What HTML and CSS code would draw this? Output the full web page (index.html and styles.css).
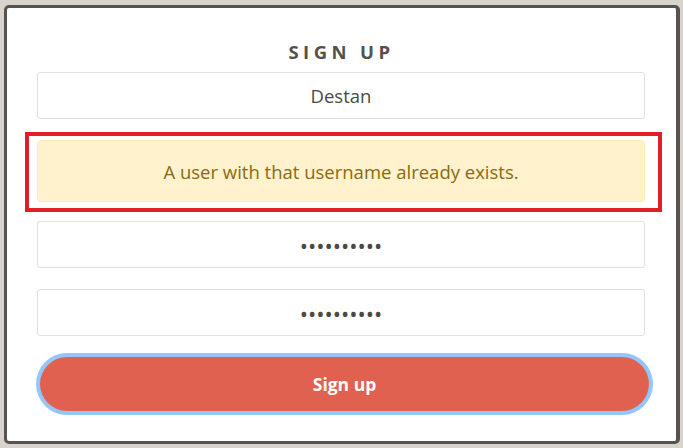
FILE: index.html
```html
<!DOCTYPE html>
<html lang="en">
<head>
<meta charset="utf-8">
<title>Sign up</title>
<link rel="stylesheet" href="styles.css">
</head>
<body>
<div class="card">
  <h1 class="title">SIGN UP</h1>
  <form class="form">
    <input class="field" type="text" value="Destan">
    <div class="highlight">
      <div class="alert">A user with that username already exists.</div>
    </div>
    <input class="field" type="password" value="password12">
    <input class="field field-gap" type="password" value="password12">
    <button class="btn" type="button">Sign up</button>
  </form>
</div>
</body>
</html>
```

FILE: styles.css
```css
html, body {
  margin: 0;
  padding: 0;
}
body {
  background: #d8d3cd;
  font-family: "Open Sans", "Noto Sans", sans-serif;
  height: 448px;
  overflow: hidden;
}
.card {
  box-sizing: border-box;
  margin: 5px 0 0 4px;
  width: 676px;
  height: 439px;
  background: #ffffff;
  border: 3px solid #58534e;
  border-right-width: 4px;
  border-radius: 5px;
  padding: 0 30px;
}
.title {
  margin: 32px 0 0 0;
  height: 32px;
  text-align: center;
  font-size: 18.5px;
  font-weight: 700;
  letter-spacing: 4.4px;
  line-height: 24px;
  color: #57504a;
}
.form {
  display: flex;
  flex-direction: column;
  width: 608px;
}
.field {
  box-sizing: border-box;
  width: 608px;
  height: 47px;
  border: 1px solid #e3e0dc;
  border-radius: 3px;
  background: #fff;
  text-align: center;
  font-family: "Open Sans", "Noto Sans", sans-serif;
  font-size: 18.5px;
  color: #4d4843;
  padding: 0 12px;
  outline: none;
}
.field[type="password"] {
  font-size: 22px;
  letter-spacing: 0;
  color: #4d4843;
}
.field-gap {
  margin-top: 21px;
}
.highlight {
  margin: 13px -17px 9px -12px;
  border: 4px solid #e11d28;
  padding: 4px 13px 6px 8px;
}
.alert {
  box-sizing: border-box;
  height: 62px;
  background: #fff2cc;
  border: 1px solid #ffedb8;
  border-radius: 4px;
  display: flex;
  align-items: center;
  justify-content: center;
  font-size: 18.5px;
  color: #8a6a12;
}
.btn {
  margin: 21px 0 0 3px;
  width: 609px;
  height: 54px;
  border: none;
  border-radius: 27px;
  background: #e06150;
  box-shadow: 0 0 0 4px #93c6fb;
  color: #ffffff;
  font-family: "Open Sans", "Noto Sans", sans-serif;
  font-weight: 700;
  font-size: 17.5px;
}
```
